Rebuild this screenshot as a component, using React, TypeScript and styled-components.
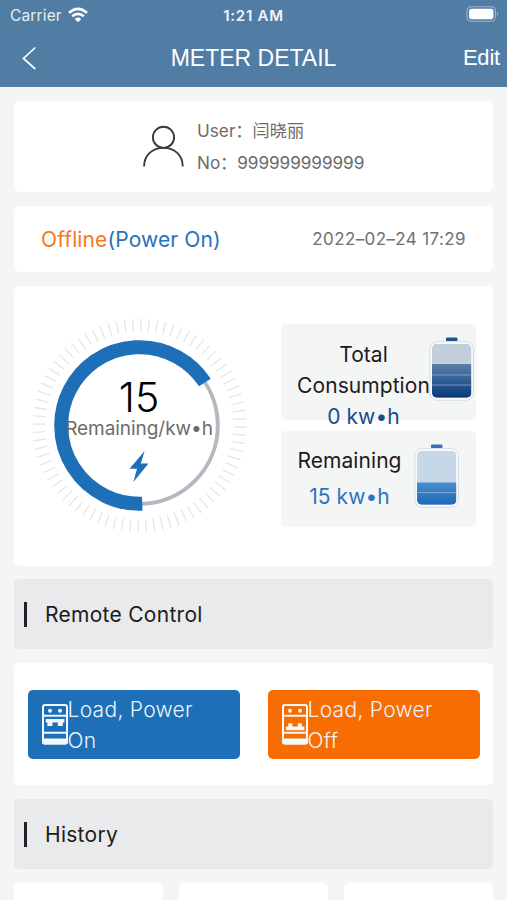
import React from "react";
import styled, { createGlobalStyle } from "styled-components";

const GlobalStyle = createGlobalStyle`
  * { box-sizing: border-box; }
  html, body { margin: 0; padding: 0; }
  body {
    background: #f5f5f5;
    font-family: Inter, "Noto Sans CJK SC", sans-serif;
    color: #1c1c1e;
    overflow: hidden;
  }
`;

const Screen = styled.main`
  width: 507px;
  height: 900px;
  overflow: hidden;
  background: #f5f5f5;
`;

const Header = styled.header`
  height: 87px;
  background: #517da4;
  color: #fff;
`;

const StatusBar = styled.div`
  height: 30px;
  padding: 0 8px 0 10px;
  display: grid;
  grid-template-columns: 1fr auto 1fr;
  align-items: center;
`;

const Carrier = styled.div`
  display: flex;
  align-items: center;
  gap: 6px;
  font-size: 15.5px;
  letter-spacing: 0.15px;
  color: #e6eef5;
`;

const Clock = styled.div`
  margin-left: -2px;
  font-size: 15px;
  font-weight: 600;
  letter-spacing: 0.75px;
  color: #f0f5f9;
`;

const BatteryStatus = styled.svg`
  justify-self: end;
  margin-top: -2px;
`;

const NavBar = styled.nav`
  height: 56px;
  padding: 0 7px 0 22px;
  display: grid;
  grid-template-columns: 1fr auto 1fr;
  align-items: center;
  font-family: "Liberation Sans", Arial, sans-serif;
`;

const Title = styled.h1`
  margin: 0 0 0 -15px;
  font-size: 23px;
  font-weight: 400;
`;

const EditLink = styled.span`
  justify-self: end;
  font-size: 22px;
  letter-spacing: -0.2px;
`;

const Content = styled.div`
  display: flex;
  flex-direction: column;
  gap: 14px;
  padding: 14px 14px 0;
`;

const Card = styled.section`
  flex: none;
  background: #fff;
  border-radius: 5px;
`;

const UserCard = styled(Card)`
  height: 91px;
  padding: 14px 0 13px 129px;
  display: flex;
  gap: 13px;
`;

const PersonIcon = styled.svg`
  margin-top: 9px;
`;

const UserInfo = styled.div`
  font-size: 17.2px;
  line-height: 32px;
  color: #6b6b6b;
`;

const Line = styled.div<{ $spacing?: number }>`
  white-space: nowrap;
  letter-spacing: ${(p) => p.$spacing ?? 0}px;
`;

const StatusCard = styled(Card)`
  height: 66px;
  padding: 0 27px;
  display: flex;
  align-items: center;
  justify-content: space-between;
`;

const State = styled.div`
  font-size: 21px;
  letter-spacing: 0.12px;
  color: #2573bd;
  white-space: nowrap;
`;

const Offline = styled.span`
  color: #fa7720;
`;

const Timestamp = styled.time`
  font-size: 17px;
  letter-spacing: 0.38px;
  color: #707070;
  white-space: nowrap;
`;

const MeterCard = styled(Card)`
  height: 280px;
  display: flex;
  padding: 32px 17px 0 18px;
  margin-bottom: -1px;
`;

const Gauge = styled.div`
  width: 216px;
  height: 216px;
  display: grid;
  flex: none;

  > * { grid-area: 1 / 1; }
`;

const GaugeText = styled.div`
  display: flex;
  flex-direction: column;
  align-items: center;
  padding: 55px 2px 0 0;
  white-space: nowrap;
`;

const GaugeValue = styled.div`
  font-size: 41px;
  line-height: 48px;
  font-weight: 300;
  color: #000;
`;

const GaugeUnit = styled.div`
  font-size: 19px;
  line-height: 16px;
  letter-spacing: -0.05px;
  color: #6c6c6c;
`;

const Bolt = styled.svg`
  margin-top: 14px;
`;

const Stats = styled.div`
  margin: 6px 0 0 33px;
  display: flex;
  flex-direction: column;
  gap: 11px;
`;

const Stat = styled.div`
  width: 195px;
  height: 96px;
  padding-left: 16px;
  display: flex;
  border-radius: 5px;
  background: #f4f5f5;
`;

const StatText = styled.div<{ $width: number; $top: number; $pitch: number }>`
  width: ${(p) => p.$width}px;
  flex: none;
  padding-top: ${(p) => p.$top}px;
  font-size: 21px;
  letter-spacing: 0.07px;
  line-height: ${(p) => p.$pitch}px;
  text-align: center;
`;

const StatValue = styled.div<{ $color: string }>`
  color: ${(p) => p.$color};
  white-space: nowrap;
`;

const Cell = styled.svg<{ $left: number }>`
  flex: none;
  margin: 12px 0 0 ${(p) => p.$left}px;
`;

const SectionTitle = styled.h2`
  flex: none;
  height: 70px;
  margin: 0;
  padding-left: 10px;
  display: flex;
  align-items: center;
  border-radius: 5px;
  background: #e8eaeb;
  font-size: 21px;
  font-weight: 400;
  letter-spacing: 0.28px;

  &::before {
    content: "";
    width: 2.5px;
    height: 25px;
    margin-right: 18.5px;
    background: #202124;
  }
`;

const ControlCard = styled(Card)`
  height: 122px;
  padding: 27px 13px 0 14px;
  display: flex;
  justify-content: space-between;
`;

const LoadButton = styled.button<{ $color: string }>`
  width: 212px;
  height: 69px;
  border: 0;
  border-radius: 5px;
  padding: 4px 0 0 13.5px;
  display: flex;
  background: ${(p) => p.$color};
  color: #eef4fa;
  font: 300 21px/31px Inter, sans-serif;
  letter-spacing: 0.3px;
  text-align: left;
`;

const BreakerSvg = styled.svg`
  flex: none;
  margin-top: 10px;
`;

const HistoryRow = styled.div`
  display: flex;
  justify-content: space-between;
`;

const HistoryCard = styled(Card)`
  width: 149px;
  height: 60px;
`;

const TICKS = 80;
const R = 78.3;
const C = 107.5;
const polar = (deg: number, r: number) => {
  const a = (deg * Math.PI) / 180;
  return `${(C + r * Math.cos(a)).toFixed(2)} ${(C + r * Math.sin(a)).toFixed(2)}`;
};

function Dial() {
  return (
    <svg width="216" height="216" viewBox="0 0 216 216" fill="none">
      {Array.from({ length: TICKS }, (_, i) => {
        const a = i * (360 / TICKS) + 0.8;
        return (
          <path key={i} d={`M${polar(a, 94)}L${polar(a, 107)}`} stroke="#e6e6e6" strokeWidth="1.3" />
        );
      })}
      <circle cx={C} cy={C} r={R} stroke="#b2b9c0" strokeWidth="4" />
      <path d={`M${polar(88, R)}A${R} ${R} 0 1 1 ${polar(-33.3, R)}`} stroke="#1d6fb8" strokeWidth="14" />
    </svg>
  );
}

interface CellProps {
  id: string;
  left: number;
  cap: string;
  empty: string;
  from: string;
  to: string;
  level: number;
  lines: number[];
}

function BatteryCell({ id, left, cap, empty, from, to, level, lines }: CellProps) {
  return (
    <Cell $left={left} width="46" height="66" viewBox="0 0 46 66">
      <defs>
        <linearGradient id={id} x1="0" y1="0" x2="0" y2="1">
          <stop offset="0" stopColor={from} />
          <stop offset="1" stopColor={to} />
        </linearGradient>
        <clipPath id={`${id}-clip`}>
          <rect x="3" y="7.8" width="39.4" height="54" rx="5" />
        </clipPath>
      </defs>
      <rect x="17" y="1.6" width="11.4" height="4" rx="1" fill={cap} />
      <rect x="1" y="5.6" width="43.4" height="58.6" rx="7" fill="#fafcfd" stroke="#d5dde3" strokeWidth="1" />
      <g clipPath={`url(#${id}-clip)`}>
        <rect x="3" y="7.8" width="39.4" height="54" fill={empty} />
        <rect x="3" y={level} width="39.4" height={61.8 - level} fill={`url(#${id})`} />
        {lines.map((y) => (
          <path key={y} d={`M3 ${y}H43`} stroke="#a9c3dc" strokeWidth="1" opacity="0.6" />
        ))}
      </g>
    </Cell>
  );
}

function Breaker({ on }: { on: boolean }) {
  return (
    <BreakerSvg width="26" height="41" viewBox="0 0 26 41">
      <rect x="1" y="1" width="24" height="38.5" rx="2" fill="none" stroke="#f2f7fb" strokeWidth="2" />
      <path d="M1 11.8H25M1 28.8H25" stroke="#f2f7fb" strokeWidth="2" />
      <path d="M0 34.4H26V38a2.5 2.5 0 0 1-2.5 2.5H2.5A2.5 2.5 0 0 1 0 38Z" fill="#f2f7fb" />
      <circle cx="8" cy="6.7" r="2" fill="#f2f7fb" />
      <circle cx="18" cy="6.7" r="2" fill="#f2f7fb" />
      <path
        d={on
          ? "M3.8 15H22.4V18.6H20.8V22H15.8V18.6H10.4V22H5.4V18.6H3.8Z"
          : "M3.8 26.2V22.4H6.2V19.2H10.4V22.4H15.8V19.2H19.8V22.4H22.4V26.2Z"}
        fill="#f2f7fb"
      />
    </BreakerSvg>
  );
}

export default function App() {
  return (
    <Screen>
      <GlobalStyle />
      <Header>
        <StatusBar>
          <Carrier>
            Carrier
            <svg width="20" height="16" viewBox="0 0 20 16" fill="none" stroke="#fff" strokeWidth="2.6">
              <path d="M1 5.7Q10-2.1 19 5.7" />
              <path d="M4.2 9.3Q10 4.3 15.8 9.3" />
              <path d="M6.8 11.9Q10 9.1 13.2 11.9L10 15.2Z" fill="#fff" stroke="none" />
            </svg>
          </Carrier>
          <Clock>1:21 AM</Clock>
          <BatteryStatus width="33" height="16" viewBox="0 0 33 16">
            <rect x="1" y="0.7" width="28.5" height="14.6" rx="4.3" fill="none" stroke="#9bb5cd" strokeWidth="1.1" />
            <rect x="3" y="2.8" width="24.5" height="10.4" rx="2.6" fill="#fff" />
            <path d="M31 5.6Q33 8 31 10.4Z" fill="#9bb5cd" />
          </BatteryStatus>
        </StatusBar>
        <NavBar>
          <svg width="15" height="24" viewBox="0 0 15 24" fill="none" stroke="#fff" strokeWidth="1.7">
            <path d="M13.3 1.5L1.5 12.5L13.3 23" />
          </svg>
          <Title>METER DETAIL</Title>
          <EditLink>Edit</EditLink>
        </NavBar>
      </Header>
      <Content>
        <UserCard>
          <PersonIcon width="41" height="43" viewBox="0 0 41 43" fill="none" stroke="#3a3a3c" strokeWidth="1.9">
            <circle cx="20.5" cy="13.3" r="10.6" />
            <path d="M1.1 42.5C1.1 31 9.4 23.9 20.5 23.9S39.7 31 39.7 42.5" />
          </PersonIcon>
          <UserInfo>
            <Line>User：闫晓丽</Line>
            <Line $spacing={-0.07}>No：999999999999</Line>
          </UserInfo>
        </UserCard>
        <StatusCard>
          <State><Offline>Offline</Offline>(Power On)</State>
          <Timestamp>2022–02–24 17:29</Timestamp>
        </StatusCard>
        <MeterCard>
          <Gauge>
            <Dial />
            <GaugeText>
              <GaugeValue>15</GaugeValue>
              <GaugeUnit>Remaining/kw•h</GaugeUnit>
              <Bolt width="20" height="31" viewBox="0 0 20 31">
                <path d="M15.6 0L0.5 17.8H8L4.4 31L19.5 12.5H11.8Z" fill="#1d6fb8" />
              </Bolt>
            </GaugeText>
          </Gauge>
          <Stats>
            <Stat>
              <StatText $width={133} $top={15} $pitch={31}>
                Total Consumption
                <StatValue $color="#1c4a8b">0 kw•h</StatValue>
              </StatText>
              <BatteryCell id="used" left={-1} cap="#1c5590" empty="#c3cfdb" from="#5b7fa9" to="#08397a" level={28} lines={[39, 49]} />
            </Stat>
            <Stat>
              <StatText $width={105} $top={12} $pitch={36}>
                Remaining
                <StatValue $color="#2a76c0">15 kw•h</StatValue>
              </StatText>
              <BatteryCell id="left" left={12} cap="#3175b8" empty="#c6d8e8" from="#4a8dd0" to="#1c69b7" level={39.5} lines={[49.5]} />
            </Stat>
          </Stats>
        </MeterCard>
        <SectionTitle>Remote Control</SectionTitle>
        <ControlCard>
          <LoadButton $color="#1d6fb8">
            <Breaker on />
            <span>Load, Power<br />On</span>
          </LoadButton>
          <LoadButton $color="#f76d02">
            <Breaker on={false} />
            <span>Load, Power<br />Off</span>
          </LoadButton>
        </ControlCard>
        <SectionTitle>History</SectionTitle>
        <HistoryRow>
          <HistoryCard />
          <HistoryCard />
          <HistoryCard />
        </HistoryRow>
      </Content>
    </Screen>
  );
}
